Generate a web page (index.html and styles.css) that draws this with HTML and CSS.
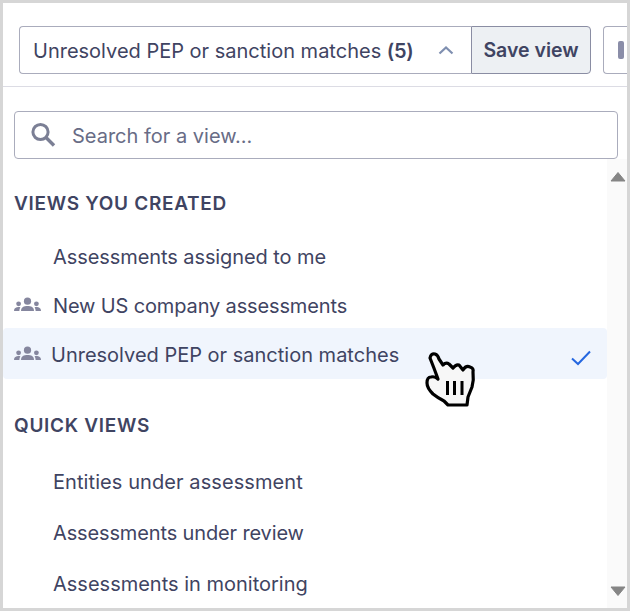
FILE: index.html
```html
<!DOCTYPE html>
<html lang="en">
<head>
<meta charset="utf-8">
<title>Views</title>
<link rel="stylesheet" href="styles.css">
</head>
<body>
<div class="frame">
  <header class="toolbar">
    <div class="picker">
      <span class="picker-label">Unresolved PEP or sanction matches <b class="count">(5)</b></span>
      <svg class="chevron" width="16" height="10" viewBox="0 0 16 10"><path d="M1.5 8.5 L8 2.5 L14.5 8.5" fill="none" stroke="#7f8fb0" stroke-width="2.2"/></svg>
    </div>
    <button class="save">Save view</button>
    <div class="next"><span class="next-bar"></span></div>
  </header>
  <div class="search-row">
    <div class="search">
      <svg width="28" height="28" viewBox="0 0 28 28" class="search-icon"><circle cx="11.5" cy="11" r="7.6" fill="none" stroke="#7b7f95" stroke-width="3"/><path d="M17 16.5 L25 24.5" stroke="#7b7f95" stroke-width="3.4" fill="none"/></svg>
      <span class="placeholder">Search for a view...</span>
    </div>
  </div>
  <div class="panel">
    <div class="list">
      <h2 class="heading first">VIEWS YOU CREATED</h2>
      <ul class="views">
        <li class="view"><span class="name snug">Assessments assigned to me</span></li>
        <li class="view">
          <svg class="team" width="27" height="16" viewBox="0 0 27 16"><use href="#team"/></svg>
          <span class="name tight">New US company assessments</span>
        </li>
        <li class="view active">
          <svg class="team" width="27" height="16" viewBox="0 0 27 16"><use href="#team"/></svg>
          <span class="name">Unresolved PEP or sanction matches</span>
          <svg class="check" width="22" height="18" viewBox="0 0 22 18"><path d="M2 9.5 L8 15 L20 2.5" fill="none" stroke="#2567e0" stroke-width="2"/></svg>
        </li>
      </ul>
      <h2 class="heading second">QUICK VIEWS</h2>
      <ul class="views quick">
        <li class="view q"><span class="name loose">Entities under assessment</span></li>
        <li class="view q"><span class="name tight">Assessments under review</span></li>
        <li class="view q"><span class="name">Assessments in monitoring</span></li>
      </ul>
    </div>
    <div class="scrollbar">
      <svg width="16" height="12" viewBox="0 0 16 12"><path d="M8 1.5 L15 10 H1 Z" fill="#858585" stroke="#858585" stroke-linejoin="round"/></svg>
      <svg width="16" height="12" viewBox="0 0 16 12"><path d="M1 2 H15 L8 10.5 Z" fill="#858585" stroke="#858585" stroke-linejoin="round"/></svg>
    </div>
  </div>
  <svg class="cursor" width="54" height="60" viewBox="0 0 54 60">
    <path d="M6 8 Q7 3 11 4 Q14 5 15 9 L19 15 Q22 12 25 14 L29 18 Q32 14 35 15 L39 20 Q42 15 46 17 Q50 18 49 22 Q50 30 48 37 L44 47 L43 55 H24 L20 51 Q14 48 9 44 Q3 38 3 33 Q3 27 7 27 Q11 26 14 29 Q10 18 6 8 Z" fill="#f7f7f7" stroke="#000" stroke-width="3.2" stroke-linejoin="round"/>
    <path d="M23.5 31 V45 M30.5 31 V45 M38 31 V45" stroke="#000" stroke-width="3" fill="none"/>
  </svg>
</div>
<svg class="defs" width="0" height="0">
  <symbol id="team" viewBox="0 0 27 16">
    <circle cx="13.5" cy="4.2" r="3.6" fill="#85869e"/>
    <circle cx="4.6" cy="6.8" r="2.4" fill="#85869e"/>
    <circle cx="22.4" cy="6.8" r="2.4" fill="#85869e"/>
    <path d="M7 14 C7 10 10 9 13.5 9 C17 9 20 10 20 14 Z" fill="#85869e"/>
    <path d="M0 14 C0 11 2 10 4.6 10 C5.5 10 6 10.2 6.4 10.4 C5.6 11.4 5.4 12.6 5.4 14 Z" fill="#85869e"/>
    <path d="M27 14 C27 11 25 10 22.4 10 C21.5 10 21 10.2 20.6 10.4 C21.4 11.4 21.6 12.6 21.6 14 Z" fill="#85869e"/>
  </symbol>
</svg>
</body>
</html>
```
FILE: styles.css
```css
* { box-sizing: border-box; }
html, body { margin: 0; padding: 0; }
body {
  width: 630px;
  height: 611px;
  overflow: hidden;
  font-family: Inter, "Liberation Sans", sans-serif;
  color: #3f4462;
  background: #fff;
}
.frame {
  position: relative;
  width: 630px;
  height: 611px;
  border: 3px solid #d6d6d6;
  overflow: hidden;
  background: #fff;
}
.toolbar {
  display: flex;
  align-items: stretch;
  height: 84px;
  padding: 23px 0 12px 16px;
  border-bottom: 1px solid #dcdce4;
}
.picker {
  flex: none;
  width: 452px;
  display: flex;
  align-items: center;
  justify-content: space-between;
  padding: 0 17px 0 14px;
  border: 1px solid #aaacbc;
  border-right: 0;
  border-radius: 4px 0 0 4px;
}
.picker-label { font-size: 20px; white-space: nowrap; margin: 2px 0 0 -1px; }
.count { font-weight: 600; letter-spacing: -0.3px; }
.save {
  flex: none;
  width: 120px;
  font: 600 19.5px Inter, "Liberation Sans", sans-serif;
  color: #3f4462;
  background: #edf0f3;
  border: 1px solid #8a8da3;
  border-radius: 0 4px 4px 0;
  padding: 0;
}
.next {
  flex: none;
  width: 40px;
  margin-left: 12px;
  border: 1px solid #aaacbc;
  border-right: 0;
  border-radius: 4px 0 0 4px;
  display: flex;
  align-items: center;
  padding-left: 14px;
}
.next-bar { width: 6px; height: 18px; border-radius: 2px; background: #8a8da8; }
.search-row { padding: 24px 9px 0 11px; }
.search {
  display: flex;
  align-items: center;
  height: 48px;
  border: 1px solid #aaacbc;
  border-radius: 4px;
  padding-left: 14px;
  gap: 15px;
}
.search-icon { flex: none; }
.placeholder { font-size: 20px; color: #686c86; margin-top: 2px; }
.panel { display: flex; height: 449px; overflow: hidden; }
.list { flex: 1; min-width: 0; }
.heading {
  margin: 0 0 0 11px;
  font-size: 19px;
  font-weight: 600;
  letter-spacing: 0.7px;
  line-height: 22px;
}
.heading.first { margin-top: 34px; }
.heading.second { margin-top: 36px; }
.views { list-style: none; margin: 17px 0 0 0; padding: 0; }
.view {
  display: flex;
  align-items: center;
  height: 49px;
  font-size: 20px;
  padding-left: 50px;
  position: relative;
}
.team { position: absolute; left: 11px; top: 16px; }
.view.active {
  height: 51px;
  margin-top: -2px;
  padding-top: 3px;
  background: #f0f5fd;
  border-radius: 4px;
  padding-left: 48px;
}
.view.active .team { top: 18px; }
.check { position: absolute; top: 21px; }
.view.active .check { right: 15px; }
.snug { letter-spacing: -0.08px; }
.tight { letter-spacing: -0.14px; }
.loose { letter-spacing: 0.08px; }
.views.quick { margin-top: 19px; }
.view.q { height: 51px; }
.scrollbar {
  flex: none;
  width: 20px;
  background: #fafafa;
  display: flex;
  flex-direction: column;
  justify-content: space-between;
  align-items: center;
  padding: 12px 0 11px 2px;
}
.cursor { position: absolute; left: 421px; top: 347px; }
.defs { position: absolute; }
```
